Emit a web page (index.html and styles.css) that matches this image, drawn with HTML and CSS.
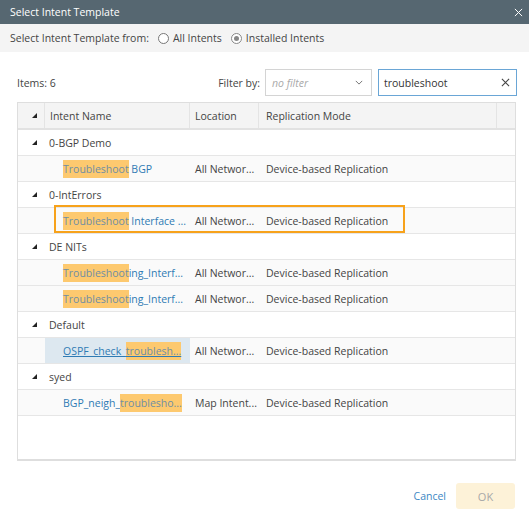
FILE: index.html
```html
<!DOCTYPE html>
<html lang="en">
    <head>
        <title>Select Intent Template</title>
        <meta charset="UTF-8">
        <link rel="stylesheet" href="styles.css">
    </head>
    <body>
        <div class="dialog">
            <div class="titlebar">
                <span>Select Intent Template</span>
                <svg class="close" viewBox="0 0 10 10"><path d="M1 1L9 9M9 1L1 9" stroke="#fff" stroke-width="1.1"/></svg>
            </div>
            <div class="source-bar">
                <span>Select Intent Template from:</span>
                <label class="radio"><span class="dot"></span>All Intents</label>
                <label class="radio checked"><span class="dot"></span>Installed Intents</label>
            </div>

            <div class="main">
                <div class="toolbar">
                    <span class="items">Items: 6</span>
                    <div class="filters">
                        <span>Filter by:</span>
                        <div class="select">
                            <span>no filter</span>
                            <svg viewBox="0 0 10 6"><path d="M1 1L5 5L9 1" fill="none" stroke="#555" stroke-width="1"/></svg>
                        </div>
                        <div class="search">
                            <span>troubleshoot</span>
                            <svg viewBox="0 0 10 10"><path d="M1 1L9 9M9 1L1 9" stroke="#444" stroke-width="1.2"/></svg>
                        </div>
                    </div>
                </div>

                <div class="grid">
                    <div class="row head">
                        <div class="cell toggle"><span class="tri"></span></div>
                        <div class="cell">Intent Name</div>
                        <div class="cell">Location</div>
                        <div class="cell">Replication Mode</div>
                        <div class="cell scroll"></div>
                    </div>

                    <div class="row group">
                        <div class="cell toggle"><span class="tri"></span></div>
                        <div class="cell">0-BGP Demo</div>
                    </div>
                    <div class="row child">
                        <div class="cell toggle"></div>
                        <div class="cell name"><a><mark>Troubleshoot</mark> BGP</a></div>
                        <div class="cell">All Networ...</div>
                        <div class="cell">Device-based Replication</div>
                    </div>

                    <div class="row group">
                        <div class="cell toggle"><span class="tri"></span></div>
                        <div class="cell">0-IntErrors</div>
                    </div>
                    <div class="row child">
                        <div class="cell toggle"></div>
                        <div class="cell name"><a><mark>Troubleshoot</mark> Interface ...</a></div>
                        <div class="cell">All Networ...</div>
                        <div class="cell">Device-based Replication</div>
                    </div>

                    <div class="row group">
                        <div class="cell toggle"><span class="tri"></span></div>
                        <div class="cell">DE NITs</div>
                    </div>
                    <div class="row child">
                        <div class="cell toggle"></div>
                        <div class="cell name"><a><mark>Troubleshoot</mark>ing_Interf...</a></div>
                        <div class="cell">All Networ...</div>
                        <div class="cell">Device-based Replication</div>
                    </div>
                    <div class="row child">
                        <div class="cell toggle"></div>
                        <div class="cell name"><a><mark>Troubleshoot</mark>ing_Interf...</a></div>
                        <div class="cell">All Networ...</div>
                        <div class="cell">Device-based Replication</div>
                    </div>

                    <div class="row group">
                        <div class="cell toggle"><span class="tri"></span></div>
                        <div class="cell">Default</div>
                    </div>
                    <div class="row child">
                        <div class="cell toggle"></div>
                        <div class="cell name selected"><a class="hover">OSPF_check_<mark>troublesh...</mark></a></div>
                        <div class="cell">All Networ...</div>
                        <div class="cell">Device-based Replication</div>
                    </div>

                    <div class="row group">
                        <div class="cell toggle"><span class="tri"></span></div>
                        <div class="cell">syed</div>
                    </div>
                    <div class="row child">
                        <div class="cell toggle"></div>
                        <div class="cell name"><a>BGP_neigh_<mark>troublesho...</mark></a></div>
                        <div class="cell">Map Intent...</div>
                        <div class="cell">Device-based Replication</div>
                    </div>

                    <div class="callout"></div>
                </div>

                <div class="footer">
                    <a class="cancel">Cancel</a>
                    <button class="ok">OK</button>
                </div>
            </div>
        </div>
    </body>
</html>
```

FILE: styles.css
```css
body {
    margin: 0;
    background: #fff;
    color: #444;
    font-family: "Open Sans", "Liberation Sans", sans-serif;
    font-size: 10.5px;
}

.dialog {
    width: 529px;
    height: 512px;
    display: flex;
    flex-direction: column;
}

.titlebar {
    height: 24px;
    background: #566771;
    color: #fff;
    display: flex;
    align-items: center;
    justify-content: space-between;
    padding: 0 6px 0 10px;
}

.titlebar .close {
    width: 9px;
    height: 9px;
}

.source-bar {
    height: 28px;
    background: #f4f4f4;
    display: flex;
    align-items: center;
    padding: 0 10px;
    gap: 9px;
}

.radio {
    display: flex;
    align-items: center;
    gap: 4px;
}

.radio .dot {
    width: 11px;
    height: 11px;
    border: 1px solid #777;
    border-radius: 50%;
    background: #fff;
    box-sizing: border-box;
    position: relative;
}

.radio.checked .dot {
    border-color: #888;
}

.radio.checked .dot::after {
    content: "";
    position: absolute;
    left: 2px;
    top: 2px;
    width: 5px;
    height: 5px;
    border-radius: 50%;
    background: #888;
}

.main {
    flex: 1;
    display: flex;
    flex-direction: column;
    padding: 17px 12px 0 17px;
}

.toolbar {
    height: 27px;
    display: flex;
    align-items: center;
    justify-content: space-between;
}

.filters {
    display: flex;
    align-items: center;
}

.filters > span {
    margin-right: 5px;
}

.select, .search {
    height: 27px;
    box-sizing: border-box;
    display: flex;
    align-items: center;
    justify-content: space-between;
    border: 1px solid #d4d4d4;
    background: #fff;
}

.select {
    width: 107px;
    padding: 0 8px 0 6px;
    margin-right: 6px;
}

.select span {
    color: #aaa;
    font-style: italic;
}

.select svg {
    width: 8px;
    height: 5px;
}

.search {
    width: 139px;
    padding: 0 6px 0 5px;
    border-color: #6aa6d6;
    color: #333;
}

.search svg {
    width: 9px;
    height: 9px;
}

.grid {
    position: relative;
    margin-top: 6px;
    height: 359px;
    box-sizing: border-box;
    border: 1px solid #dedede;
    border-bottom-width: 2px;
    margin-right: 1px;
}

.row {
    display: grid;
    grid-template-columns: 27px 145px 69px 1fr;
    height: 26px;
    border-bottom: 1px solid #e6e6e6;
    box-sizing: border-box;
}

.row.head {
    grid-template-columns: 27px 145px 69px 1fr 18px;
    background: #f4f4f4;
    border-bottom: 2px solid #e2e2e2;
    height: 27px;
}

.row.head .cell {
    border-right: 1px solid #e4e4e4;
}

.row.head .cell:last-child {
    border-right: 0;
}

.cell {
    display: flex;
    align-items: center;
    padding-left: 5px;
    white-space: nowrap;
    overflow: hidden;
}

.row .cell:nth-child(4) {
    padding-left: 7px;
}

.cell.toggle {
    padding-left: 14px;
}

.tri {
    width: 0;
    height: 0;
    border-left: 5px solid transparent;
    border-bottom: 5px solid #222;
}

.row.group .cell:nth-child(2) {
    grid-column: 2 / 5;
    padding-left: 4px;
}

.row.child {
    background: #fafafa;
}

.cell.name {
    padding-left: 18px;
}

.cell.selected {
    background: #dde8f0;
}

.cell.name a {
    color: #2f7bb4;
}

.cell.name a.hover {
    text-decoration: underline;
}

mark {
    background: #fdc96f;
    color: #6f8ea4;
    padding: 2px 0;
}

.callout {
    position: absolute;
    left: 36px;
    top: 102px;
    width: 351px;
    height: 28px;
    border: 2px solid #f7a21b;
    box-sizing: border-box;
}

.footer {
    display: flex;
    justify-content: flex-end;
    align-items: center;
    gap: 10px;
    margin-top: 22px;
    padding-right: 2px;
}

.cancel {
    color: #3c87c4;
}

.ok {
    width: 59px;
    height: 26px;
    border: 0;
    border-radius: 3px;
    background: #fdf2d8;
    color: #a8a8a8;
    font-family: inherit;
    font-size: 11px;
}
```
